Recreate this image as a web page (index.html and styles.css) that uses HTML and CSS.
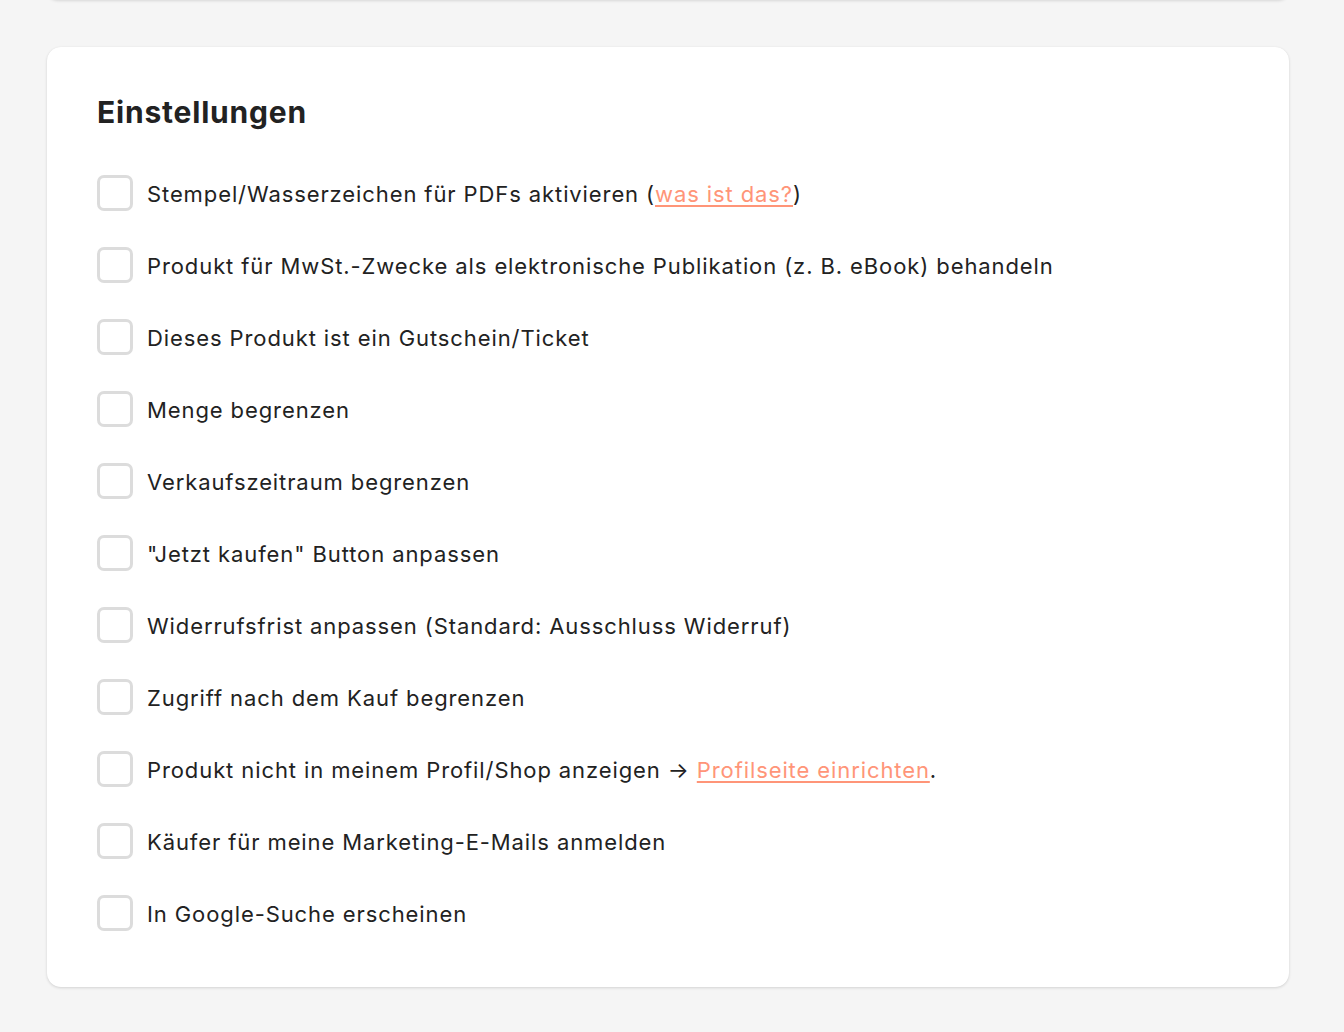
FILE: index.html
```html
<!DOCTYPE html>
<html lang="de">
<head>
<meta charset="utf-8">
<title>Einstellungen</title>
<link rel="stylesheet" href="styles.css">
</head>
<body>
<div class="prev-card"></div>
<section class="card">
  <h2 class="title">Einstellungen</h2>
  <ul class="options">
    <li class="option"><span class="box"></span><span class="label">Stempel/Wasserzeichen für PDFs aktivieren (<a href="#" class="link">was ist das?</a>)</span></li>
    <li class="option"><span class="box"></span><span class="label">Produkt für MwSt.-Zwecke als elektronische Publikation (z. B. eBook) behandeln</span></li>
    <li class="option"><span class="box"></span><span class="label">Dieses Produkt ist ein Gutschein/Ticket</span></li>
    <li class="option"><span class="box"></span><span class="label">Menge begrenzen</span></li>
    <li class="option"><span class="box"></span><span class="label">Verkaufszeitraum begrenzen</span></li>
    <li class="option"><span class="box"></span><span class="label">"Jetzt kaufen" Button anpassen</span></li>
    <li class="option"><span class="box"></span><span class="label">Widerrufsfrist anpassen (Standard: Ausschluss Widerruf)</span></li>
    <li class="option"><span class="box"></span><span class="label">Zugriff nach dem Kauf begrenzen</span></li>
    <li class="option"><span class="box"></span><span class="label">Produkt nicht in meinem Profil/Shop anzeigen → <a href="#" class="link">Profilseite einrichten</a>.</span></li>
    <li class="option"><span class="box"></span><span class="label">Käufer für meine Marketing-E-Mails anmelden</span></li>
    <li class="option"><span class="box"></span><span class="label">In Google-Suche erscheinen</span></li>
  </ul>
</section>
</body>
</html>
```
FILE: styles.css
```css
* { box-sizing: border-box; }
html, body {
  margin: 0;
  padding: 0;
  background: #f5f5f5;
  font-family: Inter, "Noto Sans", sans-serif;
  color: #222;
}
body {
  padding: 0 55px 0 47px;
  height: 1032px;
  overflow: hidden;
}
.prev-card {
  height: 20px;
  margin-top: -20px;
  background: #fff;
  border-radius: 14px;
  box-shadow: 0 1px 3px rgba(0,0,0,0.12);
}
.card {
  margin-top: 47px;
  width: 1242px;
  background: #fff;
  border-radius: 14px;
  box-shadow: 0 1px 3px rgba(0,0,0,0.14), 0 0 1px rgba(0,0,0,0.06);
  padding: 47px 50px 56px 50px;
}
.title {
  margin: 0;
  font-size: 30px;
  line-height: 36px;
  font-weight: 700;
  letter-spacing: 0.8px;
  color: #222;
}
.options {
  list-style: none;
  margin: 45px 0 0 0;
  padding: 0;
  display: flex;
  flex-direction: column;
  gap: 36px;
}
.option {
  display: flex;
  align-items: center;
  gap: 14px;
  height: 36px;
}
.box {
  flex: none;
  width: 36px;
  height: 36px;
  border: 3px solid #dcdcdc;
  border-radius: 7px;
  background: #fff;
}
.label {
  font-size: 22px;
  line-height: 30px;
  letter-spacing: 0.9px;
  padding-top: 2px;
}
.link {
  color: #ff9578;
  text-decoration: underline;
  text-decoration-thickness: 2px;
  text-underline-offset: 3px;
}
```
